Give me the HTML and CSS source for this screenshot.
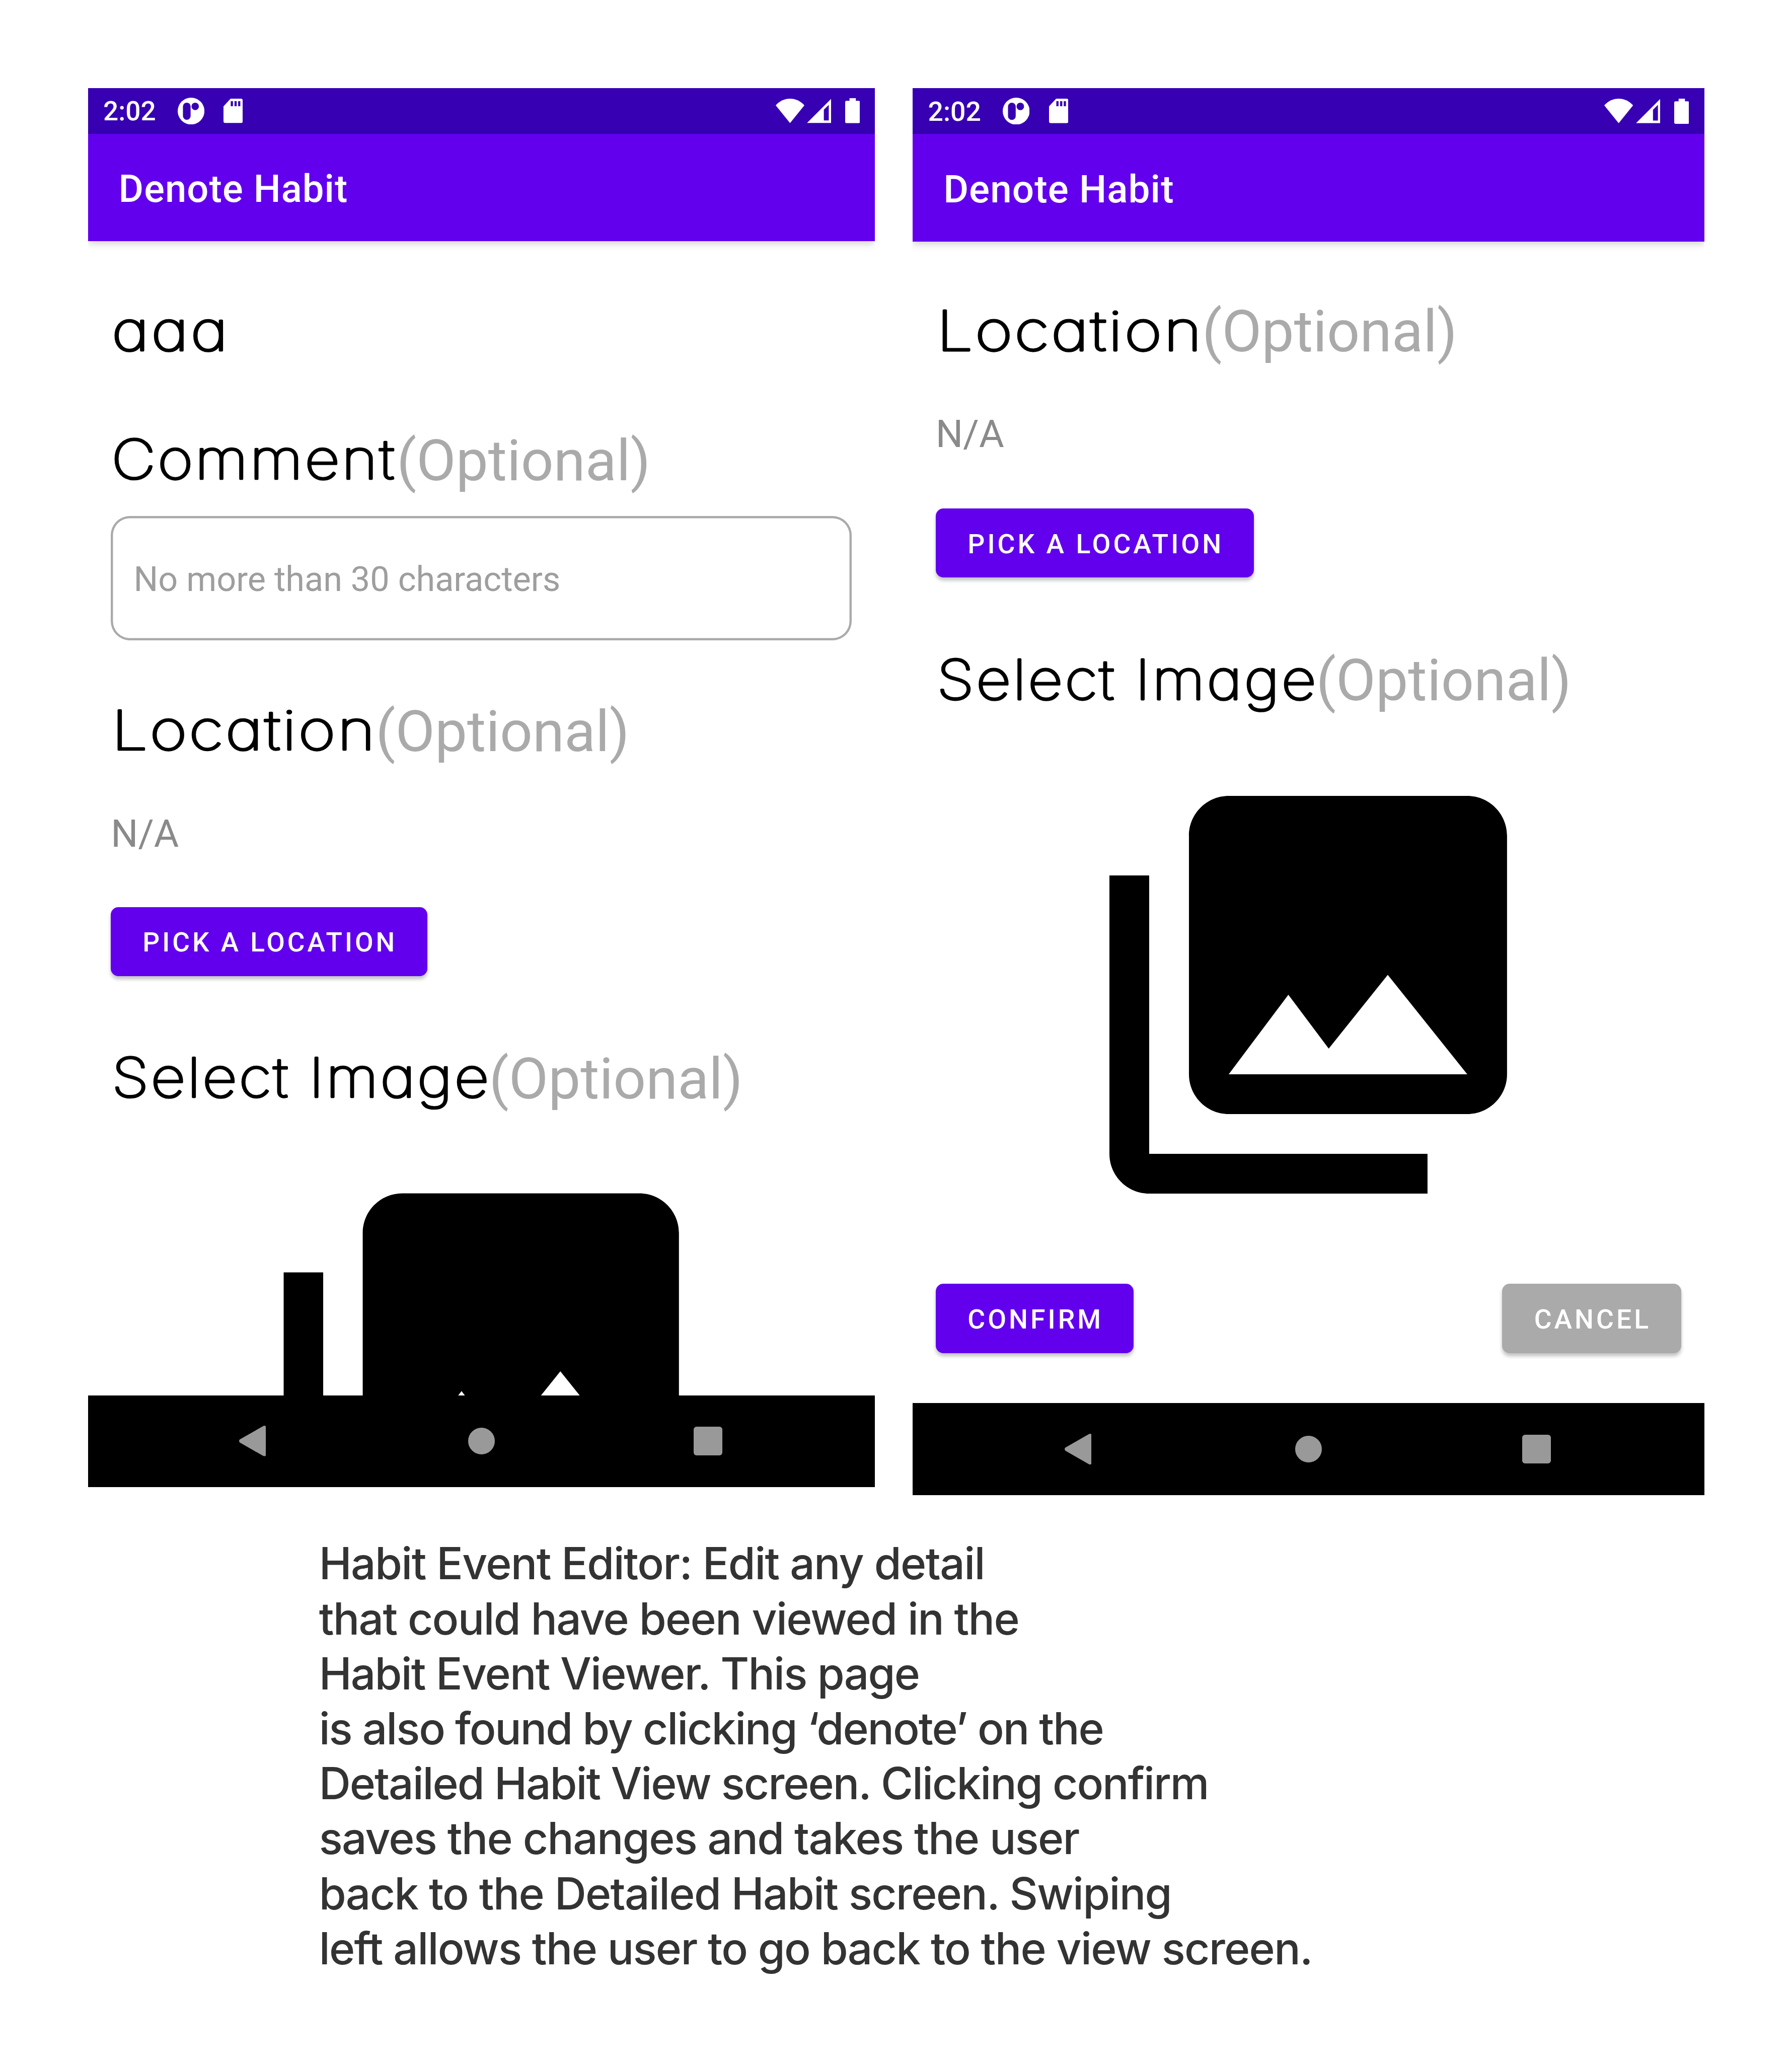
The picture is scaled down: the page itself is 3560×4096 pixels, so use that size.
FILE: index.html
```html
<!DOCTYPE html>
<html lang="en">
<head>
<meta charset="utf-8">
<title>Denote Habit</title>
<link rel="stylesheet" href="styles.css">
</head>
<body>
<svg class="defs" aria-hidden="true">
  <symbol id="ic-app" viewBox="0 0 14 14"><path fill-rule="evenodd" d="M7 0a7 7 0 1 1 0 14a7 7 0 0 1 0-14zM4.75 2.6a2 2 0 0 0-2 2v5a2 2 0 0 0 4 0v-5a2 2 0 0 0-2-2zM9.15 2.6a1.95 1.95 0 1 0 0 3.9a1.95 1.95 0 0 0 0-3.9z"/></symbol>
  <symbol id="ic-sd" viewBox="0 0 10.1 12.75"><path fill-rule="evenodd" d="M3.7 0H9.1a1 1 0 0 1 1 1v10.75a1 1 0 0 1-1 1H1a1 1 0 0 1-1-1V4zM3.8 1.3v2.65h1.15V1.3zM5.75 1.3v2.65H6.9V1.3zM7.65 1.3v2.65H8.8V1.3z"/></symbol>
  <symbol id="ic-wifi" viewBox="0 0 251 213"><path d="M0 58C35 20 78 0 125.500 0S216 20 251 58L125.500 213z"/></symbol>
  <symbol id="ic-signal" viewBox="0 0 213 213"><path fill-rule="evenodd" d="M213 0V213H0zM191 54L148 96V190H191z"/></symbol>
  <symbol id="ic-battery" viewBox="0 0 129 218"><path d="M38 0H93V23H117a12 12 0 0 1 12 12V206a12 12 0 0 1-12 12H12a12 12 0 0 1-12-12V35a12 12 0 0 1 12-12H38z"/></symbol>
  <symbol id="ic-photos" viewBox="0 0 24 24"><path d="M22 16V4c0-1.100-.9-2-2-2H8c-1.100 0-2 .9-2 2v12c0 1.100.9 2 2 2h12c1.100 0 2-.9 2-2zm-11-4l2.030 2.710L16 11l4 5H8l3-4zM2 6v14c0 1.100.9 2 2 2h14v-2H4V6H2z"/></symbol>
  <symbol id="ic-back" viewBox="0 0 14 16"><path d="M.4 7.200L12.600.2Q14-.4 14 .9V15.100Q14 16.400 12.600 15.800L.4 8.800Q-.4 8 .4 7.200z"/></symbol>
</svg>

<main class="board">
  <div class="phones">
    <section class="phone phone-a">
      <div class="status">
        <span class="time">2:02</span>
        <svg class="i-app"><use href="#ic-app"/></svg>
        <svg class="i-sd"><use href="#ic-sd"/></svg>
        <svg class="i-wifi"><use href="#ic-wifi"/></svg>
        <svg class="i-signal"><use href="#ic-signal"/></svg>
        <svg class="i-battery"><use href="#ic-battery"/></svg>
      </div>
      <header class="appbar">Denote Habit</header>
      <div class="content">
        <h2 class="heading first"><svg class="word w-comment" viewBox="0 0 149.5 40"><text x=".6" y="30.1" textLength="61.8" lengthAdjust="spacingAndGlyphs">aaa</text></svg></h2>
        <h2 class="heading"><svg class="word w-comment" viewBox="0 0 149.5 40"><text x=".4" y="30.1" textLength="148.900" lengthAdjust="spacingAndGlyphs">Comment</text></svg><span class="opt">(Optional)</span></h2>
        <div class="field">No more than 30 characters</div>
        <h2 class="heading"><svg class="word w-location" viewBox="0 0 138.5 40"><text x=".5" y="30.1" textLength="138.800" lengthAdjust="spacingAndGlyphs">Location</text></svg><span class="opt">(Optional)</span></h2>
        <p class="value">N/A</p>
        <div class="btn">PICK A LOCATION</div>
        <h2 class="heading select"><svg class="word w-select" viewBox="0 0 197.8 40"><text x=".6" y="30.1" textLength="198.200" lengthAdjust="spacingAndGlyphs">Select Image</text></svg><span class="opt">(Optional)</span></h2>
        <svg class="photos"><use href="#ic-photos"/></svg>
      </div>
      <nav class="navbar">
        <svg class="i-back"><use href="#ic-back"/></svg>
        <i class="home"></i>
        <i class="recent"></i>
      </nav>
    </section>

    <section class="phone phone-b">
      <div class="status">
        <span class="time">2:02</span>
        <svg class="i-app"><use href="#ic-app"/></svg>
        <svg class="i-sd"><use href="#ic-sd"/></svg>
        <svg class="i-wifi"><use href="#ic-wifi"/></svg>
        <svg class="i-signal"><use href="#ic-signal"/></svg>
        <svg class="i-battery"><use href="#ic-battery"/></svg>
      </div>
      <header class="appbar">Denote Habit</header>
      <div class="content">
        <h2 class="heading first"><svg class="word w-location" viewBox="0 0 138.5 40"><text x=".5" y="30.1" textLength="138.800" lengthAdjust="spacingAndGlyphs">Location</text></svg><span class="opt">(Optional)</span></h2>
        <p class="value">N/A</p>
        <div class="btn">PICK A LOCATION</div>
        <h2 class="heading select"><svg class="word w-select" viewBox="0 0 197.8 40"><text x=".6" y="30.1" textLength="198.200" lengthAdjust="spacingAndGlyphs">Select Image</text></svg><span class="opt">(Optional)</span></h2>
        <svg class="photos"><use href="#ic-photos"/></svg>
        <div class="actions">
          <div class="btn">CONFIRM</div>
          <div class="btn cancel">CANCEL</div>
        </div>
      </div>
      <nav class="navbar">
        <svg class="i-back"><use href="#ic-back"/></svg>
        <i class="home"></i>
        <i class="recent"></i>
      </nav>
    </section>
  </div>

  <p class="caption"><span class="loose">Habit Event Editor: Edit any detail</span><br>that could have been viewed in the<br><span class="snug">Habit Event Viewer. This page</span><br><span class="tighter">is also found by clicking ‘denote’ on the</span><br><span class="tight">Detailed Habit View screen. Clicking confirm</span><br>saves the changes and takes the user<br>back to the Detailed Habit screen. Swiping<br>left allows the user to go back to the view screen.</p>
</main>
</body>
</html>
```
FILE: styles.css
```css
* { box-sizing: border-box; }

body {
  margin: 0;
  background: #fff;
  font-family: Roboto, "Liberation Sans", sans-serif;
}

.defs { position: absolute; width: 0; height: 0; }

.board {
  width: 3560px;
  height: 4096px;
  padding: 174.7px 0 0 174.7px;
  overflow: hidden;
}

.phones { display: flex; align-items: flex-start; gap: 75px; height: 2840px; }

/* Sizes inside a phone are multiples of --u, the size of one dp. */
.phone {
  display: flex;
  flex-direction: column;
  flex: none;
  width: calc(var(--u) * 411.43);
  height: calc(var(--u) * 731.43);
  overflow: hidden;
  background: #fff;
}
.phone-a { --u: 3.7997px; }
.phone-b { --u: 3.8222px; }

.status {
  display: flex;
  align-items: center;
  flex: none;
  height: calc(var(--u) * 24);
  padding: 0 calc(var(--u) * 7.9) 0 calc(var(--u) * 8);
  background: #3700b3;
  color: #fff;
  fill: #fff;
}
.time {
  width: calc(var(--u) * 38.8);
  font-size: calc(var(--u) * 14);
  font-weight: 500;
  line-height: calc(var(--u) * 24);
  padding-top: calc(var(--u) * .6);
}
.i-app { width: calc(var(--u) * 14); height: calc(var(--u) * 14); }
.i-sd { width: calc(var(--u) * 10.1); height: calc(var(--u) * 12.75); margin-left: calc(var(--u) * 10); }
.i-wifi { width: calc(var(--u) * 15); height: calc(var(--u) * 12.75); margin-left: auto; }
.i-signal { width: calc(var(--u) * 12.75); height: calc(var(--u) * 12.75); margin-left: calc(var(--u) * 1.25); }
.i-battery { width: calc(var(--u) * 7.75); height: calc(var(--u) * 13.1); margin-left: calc(var(--u) * 7.2); }

.appbar {
  position: relative;
  flex: none;
  height: calc(var(--u) * 56);
  padding-left: calc(var(--u) * 16);
  background: #6200ee;
  box-shadow: 0 calc(var(--u) * 1) calc(var(--u) * 4) rgba(0, 0, 0, .2);
  color: #fff;
  font-size: calc(var(--u) * 20);
  font-weight: 500;
  letter-spacing: .0143em;
  line-height: calc(var(--u) * 57.900);
}

.content {
  flex: 1;
  min-height: 0;
  display: flex;
  flex-direction: column;
  align-items: flex-start;
  padding: 0 calc(var(--u) * 12);
  overflow: hidden;
}

.heading {
  display: flex;
  align-items: flex-start;
  flex: none;
  height: calc(var(--u) * 40);
  margin: calc(var(--u) * 27.1) 0 0;
  font-size: calc(var(--u) * 30);
  font-weight: 400;
  line-height: calc(var(--u) * 41.200);
  white-space: nowrap;
}
.phone-b .heading.first { margin-top: calc(var(--u) * 26.200); }
.heading.select { margin-top: calc(var(--u) * 33.1); }

/* Hairline letters thickened by a round-joined stroke, for soft terminals. */
.word {
  flex: none;
  height: calc(var(--u) * 40);
  overflow: visible;
  font-family: Inter, "Open Sans", sans-serif;
  font-size: 28.300px;
  font-weight: 100;
  font-feature-settings: "cv11" 1;
  letter-spacing: .035em;
  fill: #000;
  stroke: #000;
  stroke-width: 1.250px;
  stroke-linejoin: round;
}
.w-comment { width: calc(var(--u) * 149.500); }
.w-location { width: calc(var(--u) * 138.500); }
.w-select { width: calc(var(--u) * 197.800); }
.opt { color: #aaa; }

.field {
  flex: none;
  align-self: stretch;
  height: calc(var(--u) * 65.100);
  margin-top: calc(var(--u) * 9.600);
  padding: calc(var(--u) * 21.400) calc(var(--u) * 11.900) 0;
  box-shadow: inset 0 0 0 calc(var(--u) * 1.170) #aaa;
  border-radius: calc(var(--u) * 10);
  color: #9e9e9e;
  font-size: calc(var(--u) * 18);
  line-height: calc(var(--u) * 24);
}

.value {
  flex: none;
  margin: calc(var(--u) * 21.900) 0 0;
  color: #8a8a8a;
  font-size: calc(var(--u) * 20);
  line-height: calc(var(--u) * 24);
}

.btn {
  flex: none;
  height: calc(var(--u) * 36);
  margin-top: calc(var(--u) * 26.400);
  padding: 0 calc(var(--u) * 15.600) 0 calc(var(--u) * 16.600);
  border-radius: calc(var(--u) * 4);
  background: #6200ee;
  box-shadow: 0 calc(var(--u) * 1.500) calc(var(--u) * 2) rgba(0, 0, 0, .24);
  color: #fff;
  font-size: calc(var(--u) * 14);
  font-weight: 500;
  letter-spacing: .0935em;
  line-height: calc(var(--u) * 37.300);
  white-space: nowrap;
}
.cancel { background: #aaa; }

.photos {
  flex: none;
  align-self: center;
  width: calc(var(--u) * 248);
  height: calc(var(--u) * 248);
  margin-top: calc(var(--u) * 19.800);
}

.actions {
  flex: none;
  align-self: stretch;
  display: flex;
  justify-content: space-between;
  margin-top: calc(var(--u) * 26.100);
}
.actions .btn { margin-top: 0; }

.navbar {
  position: relative;
  flex: none;
  display: flex;
  align-items: center;
  height: calc(var(--u) * 48);
  padding-left: calc(var(--u) * 79);
  background: #000;
  fill: #999;
}
.i-back { width: calc(var(--u) * 14); height: calc(var(--u) * 16); }
.home {
  width: calc(var(--u) * 14);
  height: calc(var(--u) * 14);
  margin-left: calc(var(--u) * 105.800);
  border-radius: 50%;
  background: #999;
}
.recent {
  width: calc(var(--u) * 15);
  height: calc(var(--u) * 15);
  margin-left: calc(var(--u) * 104);
  border-radius: calc(var(--u) * 1.500);
  background: #999;
}

.caption {
  margin: 36.700px 0 0 459px;
  color: #333;
  font-family: Inter, "Liberation Sans", sans-serif;
  font-size: 87.360px;
  font-weight: 500;
  line-height: 109.200px;
  letter-spacing: -.02em;
  white-space: nowrap;
}
.loose { letter-spacing: -.0192em; }
.snug { letter-spacing: -.0215em; }
.tight { letter-spacing: -.0234em; }
.tighter { letter-spacing: -.024em; }
```
